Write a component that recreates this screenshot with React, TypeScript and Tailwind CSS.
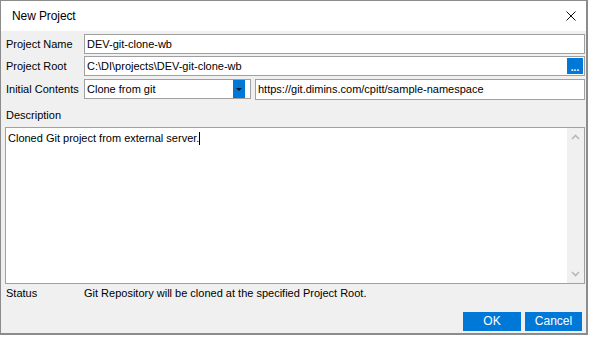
import React from "react";

const font = "font-['Liberation_Sans',Arial,sans-serif]";

const Field = ({ label, children }: { label: string; children: React.ReactNode }) => (
  <div className="flex items-center h-[20px]">
    <div className="w-[79px] pl-px shrink-0 whitespace-nowrap">{label}</div>
    {children}
  </div>
);

const TextBox = ({ value, className = "" }: { value: string; className?: string }) => (
  <div className={`h-[20px] bg-white border border-[#a0a0a0] flex items-center pl-[2px] ${className}`}>
    <span className="flex-1 truncate">{value}</span>
  </div>
);

const Chevron = ({ up }: { up?: boolean }) => (
  <svg width="9" height="6" viewBox="0 0 9 6" className="text-[#b8b8b8]">
    <path d={up ? "M1 5 L4.5 1.5 L8 5" : "M1 1 L4.5 4.5 L8 1"} fill="none" stroke="currentColor" strokeWidth="1.6" />
  </svg>
);

export default function App() {
  return (
    <div className={`w-[589px] h-[337px] bg-white text-[11px] text-black ${font}`}>
      <div className="w-[588px] h-[335px] border-l border-t border-r-2 border-b-2 border-[#8c8c8c] flex flex-col">
        {/* title bar */}
        <div className="h-[30px] bg-white flex items-center justify-between pl-[11px] pr-[10px] shrink-0">
          <span className="text-[12px] tracking-[-0.1px] text-[#000]">New Project</span>
          <svg width="10" height="10" viewBox="0 0 10 10">
            <path d="M0.5 0.5 L9.5 9.5 M9.5 0.5 L0.5 9.5" stroke="#111" strokeWidth="1" />
          </svg>
        </div>

        <div className="flex-1 bg-[#f0f0f0] flex flex-col pl-[4px] pr-px pt-[3px]">
          <div className="flex flex-col gap-[2px]">
            <Field label="Project Name">
              <TextBox value="DEV-git-clone-wb" className="flex-1" />
            </Field>
            <Field label="Project Root">
              <div className="flex-1 h-[20px] bg-white border border-[#a0a0a0] flex items-center pl-[2px] pr-px">
                <span className="flex-1 truncate">C:\DI\projects\DEV-git-clone-wb</span>
                <div className="w-[16px] h-[16px] bg-[#0078d7] text-white flex items-end justify-center text-[10px] leading-[12px] font-bold">...</div>
              </div>
            </Field>
            <div className="mt-px">
              <Field label="Initial Contents">
                <div className="w-[167px] h-[20px] bg-white border border-[#a0a0a0] flex items-center pl-[2px] pr-[5px]">
                  <span className="flex-1">Clone from git</span>
                  <div className="w-[12px] h-[18px] bg-[#0078d7] flex items-center justify-center">
                    <svg width="6" height="4" viewBox="0 0 6 4" className="mt-[2px]">
                      <path d="M0 0 H6 L3 3 Z" fill="#111" />
                    </svg>
                  </div>
                </div>
                <TextBox value="https://git.dimins.com/cpitt/sample-namespace" className="flex-1 ml-[4px] h-[21px]" />
              </Field>
            </div>
          </div>

          <div className="pl-px mt-[8px] h-[16px] flex items-center">Description</div>

          <div className="mt-[4px] h-[157px] bg-white border border-[#a0a0a0] flex">
            <div className="flex-1 pl-[2px] pt-[2px]">
              <span>Cloned Git project from external server.</span>
              <span className="inline-block w-px h-[13px] bg-black align-middle -mt-[2px]"></span>
            </div>
            <div className="w-[17px] bg-[#f0f0f0] flex flex-col items-center justify-between py-[6px]">
              <Chevron up />
              <Chevron />
            </div>
          </div>

          <div className="flex items-center h-[18px] mt-0">
            <div className="w-[79px] pl-px">Status</div>
            <div>Git Repository will be cloned at the specified Project Root.</div>
          </div>

          <div className="flex justify-end gap-[4px] mt-[10px] pr-[3px]">
            <button className="w-[58px] h-[19px] bg-[#0078d7] text-white text-[12px] leading-[19px]">OK</button>
            <button className="w-[57px] h-[19px] bg-[#0078d7] text-white text-[12px] leading-[19px]">Cancel</button>
          </div>
        </div>
      </div>
    </div>
  );
}
